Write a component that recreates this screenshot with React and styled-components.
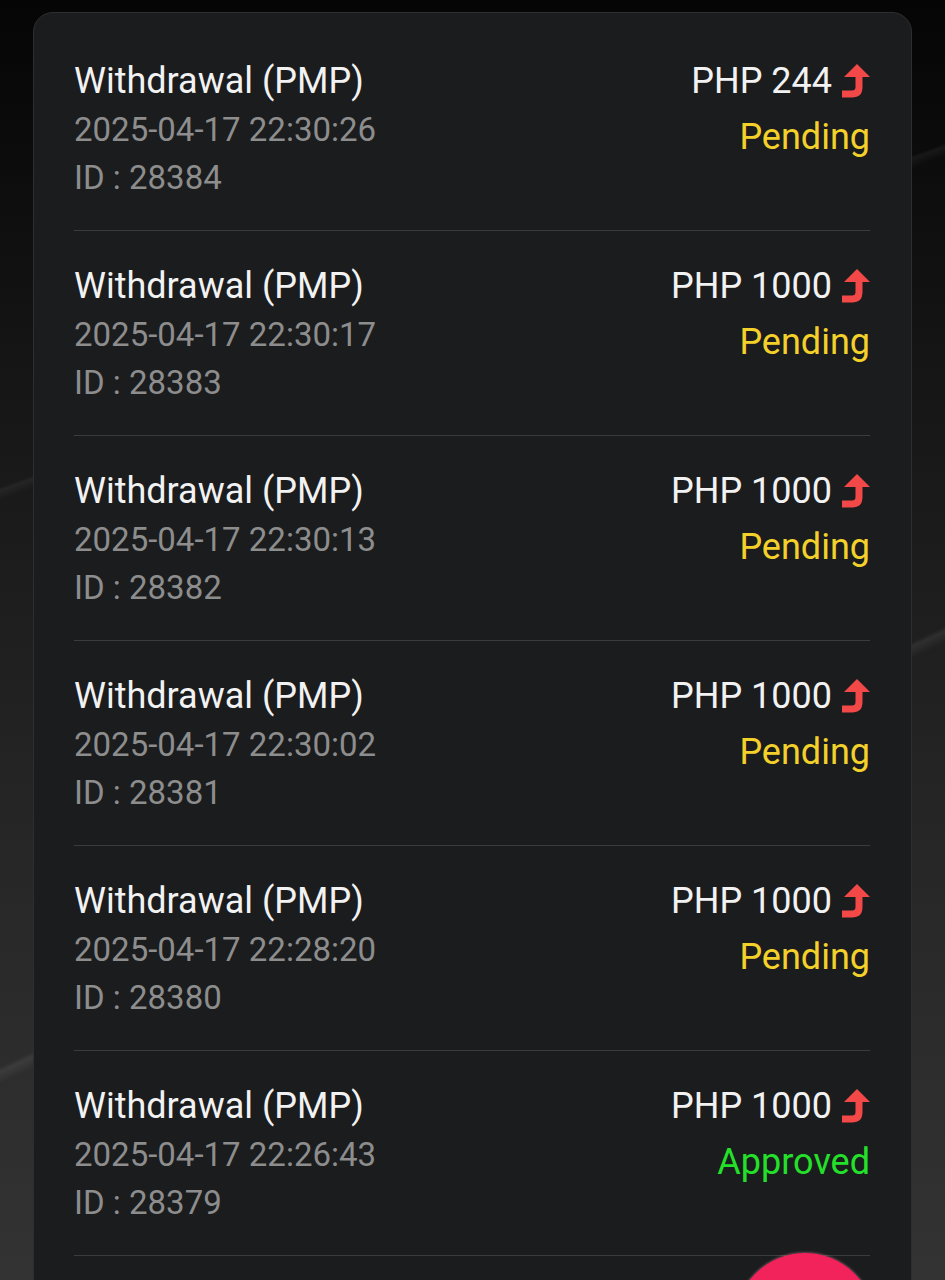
import React from 'react';
import styled, { createGlobalStyle } from 'styled-components';

const GlobalStyle = createGlobalStyle`
  html, body {
    margin: 0;
    padding: 0;
  }
  body {
    font-family: Roboto, "Noto Sans", "Liberation Sans", sans-serif;
    background-color: #141414;
    background-image:
      linear-gradient(155deg, transparent 0 62%, rgba(255,255,255,0.07) 62.3%, transparent 63% 100%),
      linear-gradient(160deg, transparent 0 30%, rgba(255,255,255,0.05) 30.2%, transparent 30.8% 100%),
      linear-gradient(180deg, #050505 0%, #161616 30%, #262626 65%, #333333 100%);
    background-attachment: fixed;
    min-height: 1280px;
    overflow: hidden;
  }
`;

const Page = styled.div`
  padding: 12px 33px 0 33px;
`;

const Card = styled.div`
  background: #1b1c1e;
  border: 1px solid #2d2e30;
  border-radius: 20px;
  padding: 13px 41px 80px 40px;
`;

const Row = styled.div`
  display: flex;
  justify-content: space-between;
  align-items: flex-start;
  padding: 30px 0 28px;
  border-bottom: 1.5px solid #3b3c3e;
`;

const Info = styled.div`
  display: flex;
  flex-direction: column;
`;

const Title = styled.div`
  color: #f2f2f2;
  font-size: 36px;
  line-height: 50px;
`;

const Meta = styled.div`
  color: #8d8d8d;
  font-size: 33px;
  line-height: 48px;
`;

const Side = styled.div`
  display: flex;
  flex-direction: column;
  align-items: flex-end;
`;

const Amount = styled.div`
  display: flex;
  align-items: center;
  gap: 10px;
  color: #f2f2f2;
  font-size: 36px;
  line-height: 50px;
`;

const statusColors = {
  Pending: '#f3d12a',
  Approved: '#25e02a',
};

const Status = styled.div`
  color: ${(p) => statusColors[p.$status] || '#ccc'};
  font-size: 36px;
  line-height: 62px;
`;

const FloatButton = styled.div`
  position: fixed;
  left: 735px;
  top: 1253px;
  width: 140px;
  height: 140px;
  border-radius: 50%;
  background: radial-gradient(circle at 50% 40%, #f2225a 0 60%, #e81d52 85%, #f7a0b6 100%);
  box-shadow: 0 0 3px rgba(255, 180, 200, 0.6);
`;

const UpArrow = () => (
  <svg width="28" height="34" viewBox="0 0 28 34" aria-hidden="true">
    <path d="M15 0 L28 13 L2 13 Z" fill="#f24848" />
    <path
      d="M0 30 H10 Q17 30 17 23 V11"
      fill="none"
      stroke="#f24848"
      strokeWidth="7"
    />
  </svg>
);

const records = [
  { time: '2025-04-17 22:30:26', id: 28384, amount: 244, status: 'Pending' },
  { time: '2025-04-17 22:30:17', id: 28383, amount: 1000, status: 'Pending' },
  { time: '2025-04-17 22:30:13', id: 28382, amount: 1000, status: 'Pending' },
  { time: '2025-04-17 22:30:02', id: 28381, amount: 1000, status: 'Pending' },
  { time: '2025-04-17 22:28:20', id: 28380, amount: 1000, status: 'Pending' },
  { time: '2025-04-17 22:26:43', id: 28379, amount: 1000, status: 'Approved' },
];

const App = () => {
  return (
    <>
      <GlobalStyle />
      <Page>
        <Card>
          {records.map((r) => (
            <Row key={r.id}>
              <Info>
                <Title>Withdrawal (PMP)</Title>
                <Meta>{r.time}</Meta>
                <Meta>ID : {r.id}</Meta>
              </Info>
              <Side>
                <Amount>
                  PHP {r.amount}
                  <UpArrow />
                </Amount>
                <Status $status={r.status}>{r.status}</Status>
              </Side>
            </Row>
          ))}
        </Card>
      </Page>
      <FloatButton />
    </>
  );
};

export default App;
